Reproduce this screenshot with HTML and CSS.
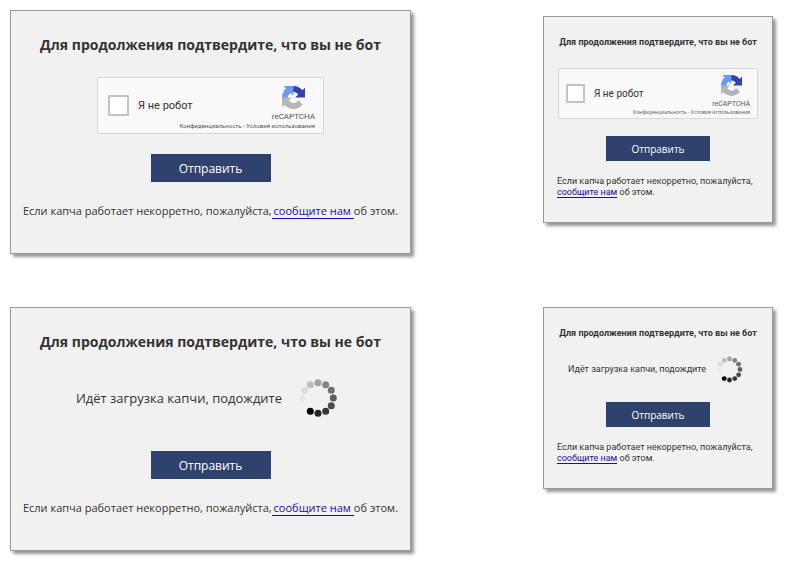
FILE: index.html
```html
<!DOCTYPE html>
<html lang="ru">
<head>
  <meta charset="UTF-8">
  <meta name="viewport" content="width=device-width, initial-scale=1.0">
  <title>Подтверждение</title>
  <link rel="stylesheet" href="styles.css">
</head>
<body>
  <!-- shared icons -->
  <svg class="sprite" aria-hidden="true">
    <symbol id="logo" viewBox="0 0 64 64">
      <path fill="#2f41b5" d="M64 31.955l-.033-1.37V4.687l-7.16 7.16C50.948 4.674 42.033.093 32.05.093c-10.4 0-19.622 4.96-25.458 12.64l11.736 11.86a15.55 15.55 0 0 1 4.754-5.334c2.05-1.6 4.952-2.906 8.968-2.906.485 0 .86.057 1.135.163 4.976.393 9.288 3.14 11.828 7.124l-8.307 8.307L64 31.953"/>
      <path fill="#6a98fc" d="M31.862.094l-1.37.033H4.594l7.16 7.16C4.58 13.147 0 22.06 0 32.046c0 10.4 4.96 19.622 12.64 25.458L24.5 45.768a15.55 15.55 0 0 1-5.334-4.754c-1.6-2.05-2.906-4.952-2.906-8.968 0-.485.057-.86.163-1.135.393-4.976 3.14-9.288 7.124-11.828l8.307 8.307L31.86.095"/>
      <path fill="#b5b5b5" d="M0 32.045l.033 1.37v25.898l7.16-7.16c5.86 7.173 14.774 11.754 24.76 11.754 10.4 0 19.622-4.96 25.458-12.64l-11.736-11.86a15.55 15.55 0 0 1-4.754 5.334c-2.05 1.6-4.952 2.906-8.968 2.906-.485 0-.86-.057-1.135-.163-4.976-.393-9.288-3.14-11.828-7.124l8.307-8.307c-10.522.04-22.4.066-27.295-.005"/>
    </symbol>
    <symbol id="dots" viewBox="0 0 54 54">
      <circle cx="11.7" cy="27" r="3.5" fill="#e9e9e9"/>
      <circle cx="13.7" cy="19.3" r="3.5" fill="#dcdcdc"/>
      <circle cx="19.3" cy="13.7" r="3.5" fill="#bebebe"/>
      <circle cx="27" cy="11.7" r="3.5" fill="#a2a2a2"/>
      <circle cx="34.7" cy="13.7" r="3.5" fill="#828282"/>
      <circle cx="40.3" cy="19.3" r="3.5" fill="#707070"/>
      <circle cx="42.3" cy="27" r="3.5" fill="#5e5e5e"/>
      <circle cx="40.3" cy="34.7" r="3.5" fill="#4b4b4b"/>
      <circle cx="34.7" cy="40.3" r="3.5" fill="#353535"/>
      <circle cx="27" cy="42.3" r="3.5" fill="#242424"/>
      <circle cx="19.3" cy="40.3" r="3.5" fill="#000"/>
    </symbol>
  </svg>

  <main class="page">
    <form class="card">
      <h2>Для продолжения подтвердите, что вы не бот</h2>
      <div class="captcha">
        <label class="check"><input type="checkbox">Я не робот</label>
        <div class="brand">
          <svg class="logo" aria-hidden="true"><use href="#logo"/></svg>
          <span>reCAPTCHA</span>
        </div>
        <div class="terms"><a href="#">Конфиденциальность</a> - <a href="#">Условия использования</a></div>
      </div>
      <button type="button">Отправить</button>
      <p class="note">Если капча работает некорретно, пожалуйста,<a href="#">сообщите нам</a>об этом.</p>
    </form>

    <form class="card small">
      <h2>Для продолжения подтвердите, что вы не бот</h2>
      <div class="captcha">
        <label class="check"><input type="checkbox">Я не робот</label>
        <div class="brand">
          <svg class="logo" aria-hidden="true"><use href="#logo"/></svg>
          <span>reCAPTCHA</span>
        </div>
        <div class="terms"><a href="#">Конфиденциальность</a> - <a href="#">Условия использования</a></div>
      </div>
      <button type="button">Отправить</button>
      <p class="note">Если капча работает некорретно, пожалуйста, <a href="#">сообщите нам</a> об этом.</p>
    </form>

    <form class="card">
      <h2>Для продолжения подтвердите, что вы не бот</h2>
      <div class="loading">
        <span>Идёт загрузка капчи, подождите</span>
        <svg class="spinner" aria-hidden="true"><use href="#dots"/></svg>
      </div>
      <button type="button">Отправить</button>
      <p class="note">Если капча работает некорретно, пожалуйста,<a href="#">сообщите нам</a>об этом.</p>
    </form>

    <form class="card small">
      <h2>Для продолжения подтвердите, что вы не бот</h2>
      <div class="loading">
        <span>Идёт загрузка капчи, подождите</span>
        <svg class="spinner" aria-hidden="true"><use href="#dots"/></svg>
      </div>
      <button type="button">Отправить</button>
      <p class="note">Если капча работает некорретно, пожалуйста, <a href="#">сообщите нам</a> об этом.</p>
    </form>
  </main>
</body>
</html>
```
FILE: styles.css
```css
* {
  box-sizing: border-box;
}
body {
  margin: 0;
  background-color: #fff;
  color: #333;
  font-family: "Open Sans", "Noto Sans", sans-serif;
}
.sprite {
  display: none;
}
.page {
  display: grid;
  grid-template-columns: minmax(0, 401px) minmax(0, 230px);
  justify-content: space-between;
  align-items: start;
  row-gap: 53px;
  padding: 10px 16px 10px 10px;
}
.card {
  display: flex;
  flex-direction: column;
  align-items: center;
  padding: 22px 11px 31px;
  background-color: #f1f1f1;
  border: 1px solid #999;
  box-shadow: 3px 3px 3px #999;
}
h2 {
  margin: 0 0 20px;
  font-size: 14px;
  line-height: 24px;
  white-space: nowrap;
}

/* captcha box */
.captcha {
  display: grid;
  grid-template-columns: 1fr auto;
  width: 227px;
  max-width: 100%;
  margin-bottom: 20px;
  padding: 8px 8px 3px 10px;
  background-color: #f9f9fb;
  border: 1px solid #d6d6d6;
  border-radius: 2px;
  font-family: Roboto, sans-serif;
}
.check {
  display: flex;
  align-items: center;
  gap: 9px;
  padding-top: 4px;
  font-size: 11px;
}
.check input {
  appearance: none;
  width: 21px;
  height: 21px;
  margin: 0;
  background-color: #fff;
  border: 2px solid #c3c3c3;
  border-radius: 1px;
}
.brand {
  display: flex;
  flex-direction: column;
  align-items: center;
  gap: 4px;
  color: #555;
  font-size: 8px;
  line-height: 8px;
}
.logo {
  width: 23px;
  height: 23px;
}
.terms {
  grid-column: 1 / -1;
  color: #555;
  font-size: 6px;
  line-height: 9px;
  text-align: right;
  white-space: nowrap;
}
.terms a {
  color: inherit;
  text-decoration: none;
}

/* loading row */
.loading {
  display: flex;
  align-items: center;
  gap: 9px;
  height: 47px;
  margin-bottom: 30px;
  font-size: 13px;
  white-space: nowrap;
}
.spinner {
  width: 54px;
  height: 54px;
}

button {
  width: 120px;
  height: 28px;
  margin: 0 0 18px;
  padding: 0;
  background-color: #2e426d;
  border: none;
  color: #fff;
  font-family: inherit;
  font-size: 12px;
  cursor: pointer;
}
.note {
  margin: 0;
  font-size: 11px;
  line-height: 22px;
  white-space: nowrap;
}
.note a {
  padding: 0 3px 0 2px;
  border-bottom: 1px solid #1a0dab;
  color: #1a0dab;
  text-decoration: none;
}

/* narrow version of the card */
.small {
  margin-top: 6px;
  padding: 17px 13px 24px;
  font-family: Roboto, sans-serif;
}
.small h2 {
  margin-bottom: 18px;
  font-size: 9px;
  line-height: 16px;
}
.small .captcha {
  width: 200px;
  margin-bottom: 17px;
  padding: 6px 7px 2px;
}
.small .check {
  font-size: 10px;
}
.small .check input {
  width: 19px;
  height: 19px;
}
.small .brand {
  font-size: 7px;
}
.small .logo {
  width: 21px;
  height: 21px;
}
.small .terms {
  font-family: "Open Sans", sans-serif;
  font-size: 5px;
  line-height: 8px;
}
.small .loading {
  gap: 5px;
  height: 32px;
  margin: -6px 0 17px;
  font-size: 9px;
}
.small .spinner {
  width: 37px;
  height: 37px;
}
.small button {
  width: 104px;
  height: 25px;
  margin-bottom: 15px;
  font-family: "Open Sans", sans-serif;
  font-size: 10px;
}
.small .note {
  width: 100%;
  font-size: 9px;
  line-height: 11px;
  white-space: normal;
}
.small .note a {
  padding: 0;
}
.small:last-child {
  margin-top: 0;
}
```
